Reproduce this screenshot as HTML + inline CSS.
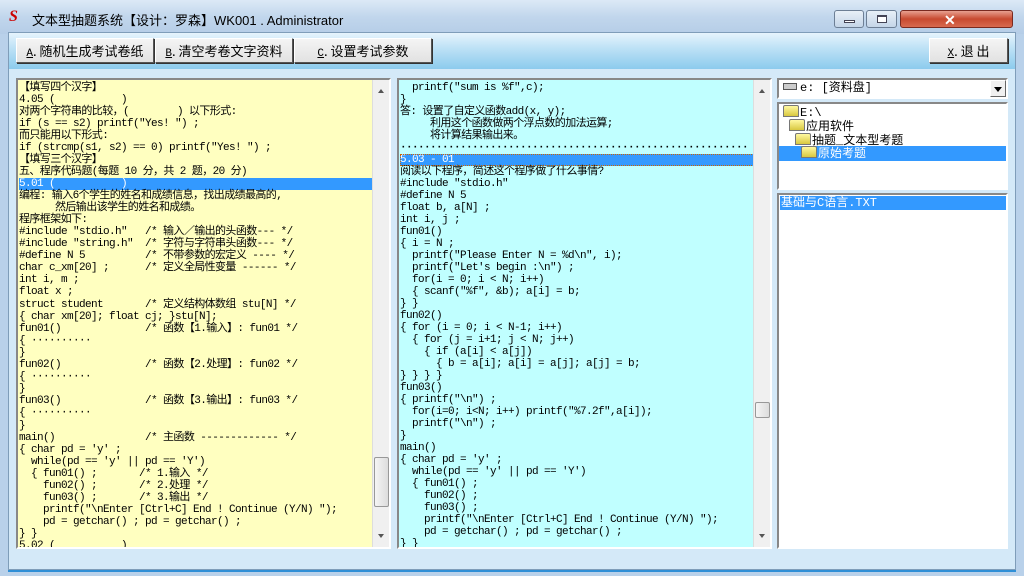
<!DOCTYPE html>
<html><head><meta charset="utf-8"><style>
*{margin:0;padding:0;box-sizing:border-box}
body{width:1024px;height:576px;overflow:hidden;background:#b9d1ea;position:relative;font-family:"Liberation Sans","Noto Sans CJK SC",sans-serif}
.abs{position:absolute}
#title{left:0;top:0;width:1024px;height:34px;background:linear-gradient(#dce9f6,#c1d6ec 50%,#b5cde7)}
#client{left:8px;top:32px;width:1008px;height:538px;background:#d4e9f8;border:1px solid #7f9db9}
#band{left:9px;top:33px;width:1006px;height:36px;background:linear-gradient(#e6f4fd,#bfe2f6 40%,#8ccbed)}
.btn{position:absolute;top:38px;height:25px;background:linear-gradient(#f4f4f4,#e2e2e2);border:1px solid;border-color:#fff #555 #555 #fff;box-shadow:1px 1px 0 #333;font:13px "Noto Sans CJK SC","WenQuanYi Zen Hei",sans-serif;text-align:center;line-height:23px;color:#000}
.btn u{font-family:"Liberation Mono",monospace;font-size:11px}
.panel{position:absolute;border:2px solid;border-color:#888 #fff #fff #888;overflow:hidden}
.txt{font:11px "Liberation Mono","Noto Sans CJK SC",monospace;letter-spacing:-0.6px;color:#000}
.txt div{height:12px;line-height:12px;white-space:pre;overflow:visible}
.txt .c div{height:12.1px;line-height:12.1px}
.sel{background:#3399ff;color:#fff}
.sb{position:absolute;right:0;top:0;width:17px;height:100%;background:#f0f0f0;border-left:1px solid #ddd}
.thumb{position:absolute;left:1px;width:15px;background:linear-gradient(90deg,#f5f5f5,#dcdcdc);border:1px solid #989898;border-radius:2px}
.wb{position:absolute;top:10px;height:18px;border:1px solid #6d7f95;border-radius:3px;background:linear-gradient(#e8f0f8,#c4d5e8)}
.fold{display:inline-block;width:16px;height:12px;vertical-align:-1px;margin-right:1px;background:linear-gradient(#fff8a0,#d8c840);border:1px solid #777;border-radius:2px 2px 0 0}
.tree div{height:14px;line-height:14px;white-space:nowrap}
</style></head><body>
<div id="title" class="abs"></div>
<div class="abs" style="left:9px;top:8px;font:bold italic 16px 'Liberation Serif',serif;color:#c00">S</div>
<div class="abs" style="left:32px;top:10px;font-size:13px;color:#000;font-family:'Liberation Sans','Noto Sans CJK SC',sans-serif">文本型抽题系统【设计：罗森】WK001 . Administrator</div>
<div class="wb" style="left:834px;width:30px"><div style="position:absolute;left:9px;top:9px;width:11px;height:3px;background:#fff;border:1px solid #445"></div></div>
<div class="wb" style="left:866px;width:31px"><div style="position:absolute;left:10px;top:4px;width:10px;height:8px;border:1px solid #445;border-top-width:2px;background:#fff"></div></div>
<div class="wb" style="left:900px;width:113px;background:linear-gradient(#e8a090,#c84a30 50%,#d86a50);border-color:#7a2a20"><div style="position:absolute;left:43px;top:1px;color:#fff;font:bold 14px 'Liberation Sans',sans-serif">✕</div></div>

<div id="client" class="abs"></div>
<div id="band" class="abs"></div>
<div class="btn" style="left:16px;width:138px"><u>A</u>. 随机生成考试卷纸</div>
<div class="btn" style="left:155px;width:138px"><u>B</u>. 清空考卷文字资料</div>
<div class="btn" style="left:294px;width:138px"><u>C</u>. 设置考试参数</div>
<div class="btn" style="left:929px;width:79px"><u>X</u>. 退 出</div>

<div class="panel" style="left:16px;top:78px;width:375px;height:471px;background:#ffffc0">
<div class="txt" style="position:absolute;left:1px;top:2px;width:354px"><div>【填写四个汉字】</div><div>4.05 (           )</div><div>对两个字符串的比较，(        ) 以下形式:</div><div>if (s == s2) printf("Yes! ") ;</div><div>而只能用以下形式:</div><div>if (strcmp(s1, s2) == 0) printf("Yes! ") ;</div><div>【填写三个汉字】</div><div>五、程序代码题(每题 10 分，共 2 题，20 分)</div><div class="sel">5.01 (           )</div><div>编程: 输入6个学生的姓名和成绩信息，找出成绩最高的,</div><div>      然后输出该学生的姓名和成绩。</div><div>程序框架如下:</div><section class="c"><div>#include "stdio.h"   /* 输入／输出的头函数--- */</div><div>#include "string.h"  /* 字符与字符串头函数--- */</div><div>#define N 5          /* 不带参数的宏定义 ---- */</div><div>char c_xm[20] ;      /* 定义全局性变量 ------ */</div><div>int i, m ;</div><div>float x ;</div><div>struct student       /* 定义结构体数组 stu[N] */</div><div>{ char xm[20]; float cj; }stu[N];</div><div>fun01()              /* 函数【1.输入】: fun01 */</div><div>{ ··········</div><div>}</div><div>fun02()              /* 函数【2.处理】: fun02 */</div><div>{ ··········</div><div>}</div><div>fun03()              /* 函数【3.输出】: fun03 */</div><div>{ ··········</div><div>}</div><div>main()               /* 主函数 ------------- */</div><div>{ char pd = 'y' ;</div><div>  while(pd == 'y' || pd == 'Y')</div><div>  { fun01() ;       /* 1.输入 */</div><div>    fun02() ;       /* 2.处理 */</div><div>    fun03() ;       /* 3.输出 */</div><div>    printf("\nEnter [Ctrl+C] End ! Continue (Y/N) ");</div><div>    pd = getchar() ; pd = getchar() ;</div><div>} }</div><div>5.02 (           )</div></section></div>
<div class="sb"><div style="position:absolute;left:5px;top:6px;width:0;height:0;border:3px solid transparent;border-bottom:4px solid #555"></div>
<div class="thumb" style="top:377px;height:50px"></div>
<div style="position:absolute;left:5px;bottom:6px;width:0;height:0;border:3px solid transparent;border-top:4px solid #555"></div></div>
</div>

<div class="panel" style="left:397px;top:78px;width:375px;height:471px;background:#c0ffff">
<div class="txt" style="position:absolute;left:1px;top:2px;width:354px"><div>  printf("sum is %f",c);</div><div>}</div><div>答: 设置了自定义函数add(x, y);</div><div>     利用这个函数做两个浮点数的加法运算;</div><div>     将计算结果输出来。</div><div style="overflow:hidden;font-weight:bold">··························································</div><div class="sel" style="outline:1px dotted #c60;outline-offset:-1px">5.03 - 01</div><div>阅读以下程序，简述这个程序做了什么事情?</div><div>#include "stdio.h"</div><div>#define N 5</div><div>float b, a[N] ;</div><div>int i, j ;</div><div>fun01()</div><div>{ i = N ;</div><div>  printf("Please Enter N = %d\n", i);</div><div>  printf("Let's begin :\n") ;</div><div>  for(i = 0; i &lt; N; i++)</div><div>  { scanf("%f", &amp;b); a[i] = b;</div><div>} }</div><div>fun02()</div><div>{ for (i = 0; i &lt; N-1; i++)</div><div>  { for (j = i+1; j &lt; N; j++)</div><div>    { if (a[i] &lt; a[j])</div><div>      { b = a[i]; a[i] = a[j]; a[j] = b;</div><div>} } } }</div><div>fun03()</div><div>{ printf("\n") ;</div><div>  for(i=0; i&lt;N; i++) printf("%7.2f",a[i]);</div><div>  printf("\n") ;</div><div>}</div><div>main()</div><div>{ char pd = 'y' ;</div><div>  while(pd == 'y' || pd == 'Y')</div><div>  { fun01() ;</div><div>    fun02() ;</div><div>    fun03() ;</div><div>    printf("\nEnter [Ctrl+C] End ! Continue (Y/N) ");</div><div>    pd = getchar() ; pd = getchar() ;</div><div>} }</div></div>
<div class="sb"><div style="position:absolute;left:5px;top:6px;width:0;height:0;border:3px solid transparent;border-bottom:4px solid #555"></div>
<div class="thumb" style="top:322px;height:16px"></div>
<div style="position:absolute;left:5px;bottom:6px;width:0;height:0;border:3px solid transparent;border-top:4px solid #555"></div></div>
</div>

<div class="panel" style="left:777px;top:78px;width:231px;height:21px;background:#fff;font:12px 'Liberation Mono','Noto Sans CJK SC',monospace;line-height:17px;white-space:nowrap">
<span style="display:inline-block;width:14px;height:7px;border:1px solid #555;background:#ccc;margin:0 3px 0 4px;vertical-align:1px"></span>e: [资料盘]
<div style="position:absolute;right:0;top:0;width:16px;height:17px;background:#f0f0f0;border:1px solid;border-color:#fff #666 #666 #fff"><div style="position:absolute;left:3px;top:6px;border:4px solid transparent;border-top:5px solid #000"></div></div>
</div>
<div class="panel" style="left:777px;top:102px;width:231px;height:88px;background:#fff;font:12px 'Liberation Mono','Noto Sans CJK SC',monospace">
<div class="tree" style="position:absolute;left:4px;top:1px"><div><span class="fold"></span>E:\</div><div style="padding-left:6px"><span class="fold"></span>应用软件</div><div style="padding-left:12px"><span class="fold"></span>抽题_文本型考题</div></div>
<div style="position:absolute;left:0;top:42px;width:229px;height:15px;background:#3399ff;color:#fff;padding-left:22px;line-height:14px;white-space:nowrap"><span class="fold"></span>原始考题</div>
</div>
<div class="panel" style="left:777px;top:193px;width:231px;height:356px;background:#fff;font:12px 'Liberation Mono','Noto Sans CJK SC',monospace">
<div style="margin:1px 0 0 1px;width:226px;height:14px;line-height:14px;background:#3399ff;color:#fff;padding-left:1px;white-space:nowrap">基础与C语言.TXT</div>
</div>
<div class="abs" style="left:8px;top:570px;width:1008px;height:2px;background:#2f8fd6"></div>
</body></html>
